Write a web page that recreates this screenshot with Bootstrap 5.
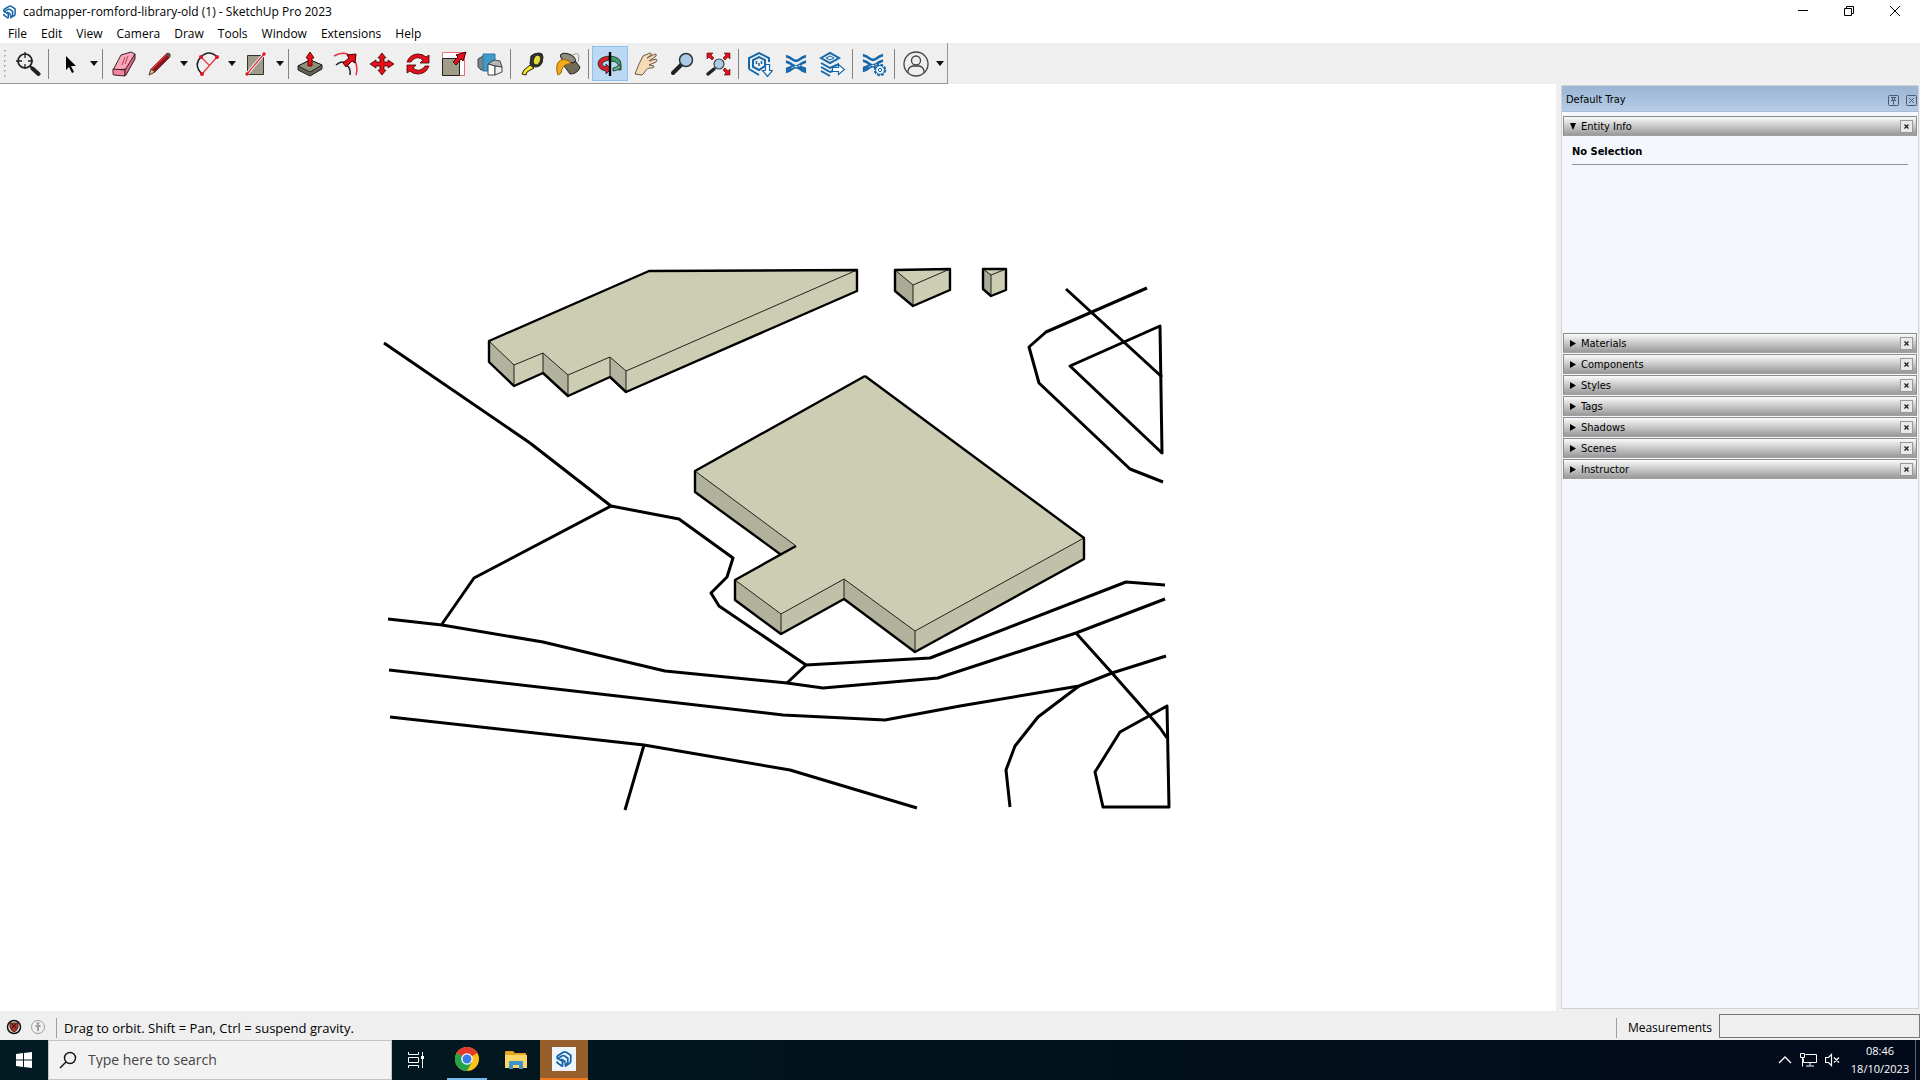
<!DOCTYPE html>
<html lang="en">
<head>
<meta charset="utf-8">
<meta name="viewport" content="width=device-width, initial-scale=1">
<title>cadmapper-romford-library-old (1) - SketchUp Pro 2023</title>
<link rel="stylesheet" href="https://cdn.jsdelivr.net/npm/bootstrap@5.3.0/dist/css/bootstrap.min.css">
<style>
  body { font-family: "Open Sans", "Noto Sans", sans-serif; font-size: 12px; line-height: 16px; color: #000; background: #efefef; }
  button { border: 0; padding: 0; background: transparent; color: inherit; }
  svg { display: block; flex: none; }
  .title-bar { height: 24px; padding: 0 2px 0 2px; gap: 6px; }
  .win-btns { height: 22px; }
  .win-btn { width: 46px; height: 22px; }
  .menu-bar { height: 19px; padding-left: 1px; }
  .menu-bar a { color: #000; padding: 0 7px; }
  .tool-strip { height: 41px; }
  .tool-group { border-bottom: 1px solid #949494; border-right: 1px solid #949494; width: 948px; padding-top: 1px; }
  .grip { width: 10px; height: 32px; background: radial-gradient(circle, #b0b0b0 1px, transparent 1px) 2px 0 / 5px 5px repeat-y; }
  .tool { width: 36px; height: 35px; }
  .tool.active { background: #bcd9f3; border: 1px solid #8fc0ea; }
  .caret { width: 12px; height: 35px; }
  .divider { width: 6px; height: 30px; padding-left: 2px; }
  .divider::before { content: ""; display: block; width: 1px; height: 100%; background: #808080; }
  .tray { width: 359px; margin-left: 5px; padding-top: 1px; font-family: "DejaVu Sans Condensed", "Noto Sans", sans-serif; font-size: 11px; }
  .tray-box { border: 1px solid #cfd2d6; background: #f4f7fc; margin: 0 1px 2px 0; }
  .tray-title { height: 26px; background: linear-gradient(#9bb4d1, #b5cde9); border-bottom: 1px solid #a9bcd2; padding: 3px 1px 0 4px; gap: 7px; }
  .tray-title button { width: 11px; height: 11px; }
  .panel-list { padding: 4px 1px 0; }
  .panel { height: 20px; border: 1px solid #8c8c8c; border-bottom-color: #a0a0a0; background: linear-gradient(#fbfbfb, #c9c9c9 50%, #999); padding: 0 3px 0 5px; margin-bottom: 1px; }
  .panel span { padding-top: 2px; }
  .panel-x { width: 13px; height: 13px; border: 1px solid #999; background: #e9e9e9; }
  .info-body { height: 196px; padding: 6px 9px; }
  .info-body h2 { font-size: 11px; line-height: 18px; padding-bottom: 3px; border-bottom: 1px solid #8f9194; }
  .status-bar { height: 29px; gap: 7px; }
  .status-bar span { font-size: 13px; }
  .status-rule { width: 1px; height: 20px; background: #a0a0a0; }
  .measure-box { width: 201px; height: 24px; border: 1px solid #777; background: #efefef; border-radius: 0; }
  .task-bar { height: 40px; background: linear-gradient(90deg, #021a21, #01131c 50%, #030a1b); color: #fff; }
  .task-btn { width: 48px; height: 40px; }
  .search-box { width: 344px; height: 40px; background: #f2f2f2; border: 1px solid #c4c4c4; padding-left: 10px; gap: 11px; }
  .search-box input { border: 0; background: transparent; outline: 0; font-size: 14px; color: #444; }
  .search-box input::placeholder { color: #444; opacity: 1; }
  .running { border-bottom: 2px solid #76b9ed; width: 40px; height: 40px; margin: 0 5px 0 7px; }
  .current { background: #965f2c; border-bottom: 2px solid #f07818; }
  .clock { width: 70px; line-height: 18px; font-size: 11px; }
  .show-desk { width: 5px; height: 40px; border-left: 1px solid #5c6470; }
</style>
<script src="https://cdn.jsdelivr.net/npm/bootstrap@5.3.0/dist/js/bootstrap.bundle.min.js"></script>
</head>
<body class="d-flex flex-column vh-100 overflow-hidden">

<svg width="0" height="0" class="position-absolute" aria-hidden="true">
  <defs>
    <symbol id="su-logo" viewBox="0 0 24 24"><g fill="none" stroke="#1564a8" stroke-width="2.4" stroke-linejoin="round"><path d="M3 8 11 3q2-1 4 0l6 4v8q0 2-2 3l-6 4"/><path d="M3 12l6-4q2-1 4 0l4 3v6l-4 3"/><path d="M3 8v3l7 4v7"/><path d="M3 15v2l7 5"/><path d="M8 12l5 3v3"/></g></symbol>
    <symbol id="ext-waves" viewBox="0 0 24 24"><path d="M1 2q5 1 8 4 3 2 6 0 3-3 8-4v3q-4 1-6 3-5 4-10 0-2-2-6-3zM1 8q5 1 8 4 3 2 6 0 3-3 8-4v3q-4 1-6 3-5 3-10 0-2-2-6-3zM1 22q5-1 8-4 3-2 6 0 3 3 8 4v-3q-4-1-6-3-5-4-10 0-2 2-6 3zM1 16q4-1 7-3l3 2q-5 2-10 4zM23 16q-4-1-7-3l-3 2q5 2 10 4z" fill="#1467ab"/></symbol>
    <symbol id="tri-down" viewBox="0 0 8 5"><path d="M0 0h8L4 5z" fill="#111"/></symbol>
    <symbol id="tiny-x" viewBox="0 0 5 5"><path d="M.5.5l4 4m0-4l-4 4" stroke="#222" stroke-width="1.3"/></symbol>
  </defs>
</svg>

<header class="bg-white">
  <div class="title-bar d-flex align-items-center">
    <svg width="15" height="16"><use href="#su-logo" width="15" height="16"/></svg>
    <span class="me-auto">cadmapper-romford-library-old (1) - SketchUp Pro 2023</span>
    <div class="win-btns d-flex align-self-start">
    <button class="win-btn d-flex justify-content-center align-items-center" aria-label="Minimize"><svg width="10" height="10"><path d="M0 4.500h10" stroke="#000"/></svg></button>
    <button class="win-btn d-flex justify-content-center align-items-center" aria-label="Restore"><svg width="10" height="10" fill="none" stroke="#000"><path d="M.5 2.500h7v7h-7zM2.500 2.500v-2h7v7h-2"/></svg></button>
    <button class="win-btn d-flex justify-content-center align-items-center" aria-label="Close"><svg width="10" height="10"><path d="M0 0l10 10M10 0L0 10" stroke="#000"/></svg></button>
    </div>
  </div>
  <nav class="menu-bar d-flex align-items-center">
    <a href="#" class="text-decoration-none">File</a><a href="#" class="text-decoration-none">Edit</a><a href="#" class="text-decoration-none">View</a><a href="#" class="text-decoration-none">Camera</a><a href="#" class="text-decoration-none">Draw</a><a href="#" class="text-decoration-none">Tools</a><a href="#" class="text-decoration-none">Window</a><a href="#" class="text-decoration-none">Extensions</a><a href="#" class="text-decoration-none">Help</a>
  </nav>
</header>

<div class="tool-strip d-flex">
  <div class="tool-group d-flex align-items-center" role="toolbar" aria-label="Getting Started">
    <div class="grip"></div>
    <button class="tool d-flex justify-content-center align-items-center" aria-label="Search"><svg width="26" height="26"><circle cx="10" cy="10" r="7" fill="none" stroke="#222" stroke-width="1.700"/><path d="M10 1v6m0 6v5M1 10h6m6 0h5" stroke="#222" stroke-width="1.300"/><path d="M15 15l3 3" stroke="#222" stroke-width="2"/><path d="M17.500 17.500l6 5.500" stroke="#222" stroke-width="4" stroke-linecap="round"/></svg></button>
    <div class="divider"></div>
    <button class="tool d-flex justify-content-center align-items-center" aria-label="Select"><svg width="26" height="26"><path d="M9 5v14l3-3 3 6 2-1-3-6h5z" fill="#000"/></svg></button>
    <button class="caret d-flex justify-content-center align-items-center" aria-label="Select options"><svg width="8" height="5"><use href="#tri-down"/></svg></button>
    <div class="divider"></div>
    <button class="tool d-flex justify-content-center align-items-center" aria-label="Eraser"><svg width="26" height="26" stroke="#3a2228" stroke-linejoin="round"><path d="M10 4l10-3 4 2-8 15-14 1z" fill="#f9a6b8"/><path d="M2 18l12 1v6L3 24q-1 0-1-1z" fill="#f6839b"/><path d="M14 19L24 3v5l-9 16-1 1z" fill="#d96a82"/><path d="M14 6l-3 8m6-9l-3 8" stroke="#a34559" fill="none"/></svg></button>
    <button class="tool d-flex justify-content-center align-items-center" aria-label="Line"><svg width="26" height="26"><path d="M2 24l2-6L19 3q2-2 4 0 1 2-1 4L8 21z" fill="#8d1418" stroke="#3a1010" stroke-width=".6"/><path d="M5 18L20 3" stroke="#e8323a" stroke-width="1.500"/><path d="M2 24l2-6 4 3z" fill="#e3b98a" stroke="#332" stroke-width=".7"/><path d="M19 3q2-2 4 0 1 2-1 4z" fill="#555"/></svg></button>
    <button class="caret d-flex justify-content-center align-items-center" aria-label="Line options"><svg width="8" height="5"><use href="#tri-down"/></svg></button>
    <button class="tool d-flex justify-content-center align-items-center" aria-label="2 Point Arc"><svg width="26" height="26" fill="none"><path d="M7 23Q-2 14 6 6q8-8 16 0" stroke="#222" stroke-width="1.500"/><path d="M22 6L7 23M6 6l9 9" stroke="#e8323f" stroke-width="1.200"/><g fill="#e01025"><circle cx="22" cy="6" r="2"/><circle cx="7" cy="23" r="2"/><circle cx="6" cy="6" r="2"/></g></svg></button>
    <button class="caret d-flex justify-content-center align-items-center" aria-label="Arc options"><svg width="8" height="5"><use href="#tri-down"/></svg></button>
    <button class="tool d-flex justify-content-center align-items-center" aria-label="Rectangle"><svg width="26" height="26"><path d="M4.500 4.500h16v19h-16z" fill="#a09c8a" stroke="#333"/><path d="M4 23L21 3" stroke="#fff" stroke-width="3"/><path d="M4 23L21 3" stroke="#d8202e" stroke-width="1.200"/><circle cx="4" cy="23" r="1.700" fill="#e01025"/><circle cx="21" cy="3" r="1.700" fill="#e01025"/></svg></button>
    <button class="caret d-flex justify-content-center align-items-center" aria-label="Rectangle options"><svg width="8" height="5"><use href="#tri-down"/></svg></button>
    <div class="divider"></div>
    <button class="tool d-flex justify-content-center align-items-center" aria-label="Push/Pull"><svg width="26" height="26" stroke="#222" stroke-linejoin="round"><path d="M1 15l12-6 12 5v4l-12 7-12-6z" fill="#5f6350"/><path d="M1 15l12-6 12 5-12 7z" fill="#8d927a"/><path d="M13 1l4 6h-2v8h-4V7H9z" fill="#e5101c" stroke="#700"/></svg></button>
    <button class="tool d-flex justify-content-center align-items-center" aria-label="Offset"><svg width="26" height="26" fill="none"><path d="M1 5q10-6 18 1 7 8 4 18" stroke="#e8323f" stroke-width="1.500"/><path d="M3 14q7-6 11 0 4 4 3 10" stroke="#222" stroke-width="1.500"/><path d="M10 12l6-5-2-3 9-1-1 9-3-2-6 6z" fill="#e5101c" stroke="#400"/></svg></button>
    <button class="tool d-flex justify-content-center align-items-center" aria-label="Move"><svg width="26" height="26" fill="#e5101c" stroke="#400" stroke-width=".8"><path d="M13 2l4 5h-2v4h4V9l6 4-6 4v-2h-4v4h2l-4 5-4-5h2v-4H7v2l-6-4 6-4v2h4V7H9z"/></svg></button>
    <button class="tool d-flex justify-content-center align-items-center" aria-label="Rotate"><svg width="26" height="26" fill="#e5101c" stroke="#400" stroke-width=".8"><path d="M2 11Q5 3 13 3q5 0 8 3l3-2v8h-9l3-3q-5-4-9-1-2 1-3 3z"/><path d="M24 15q-3 8-11 8-5 0-8-3l-3 2v-8h9l-3 3q5 4 9 1 2-1 3-3z"/></svg></button>
    <button class="tool d-flex justify-content-center align-items-center" aria-label="Scale"><svg width="26" height="26"><path d="M1.500 1.500h22v23h-22z" fill="#fff" stroke="#f06a78"/><path d="M1.500 7.500h17v17h-17z" fill="#a09c8a" stroke="#222"/><path d="M12 11l5-5-2-2 10-3-3 9-2-2-5 6z" fill="#e5101c" stroke="#400"/></svg></button>
    <button class="tool d-flex justify-content-center align-items-center" aria-label="Flip"><svg width="26" height="26" stroke="#444" stroke-linejoin="round"><path d="M1 8l5-3h4v14H4l-3-3z" fill="#808488"/><path d="M6 3h12v17H6z" fill="#3e9cc8" stroke="#2879a5"/><path d="M11 13l6-4 6 1 2 6-7-1z" fill="#b8b8b8"/><path d="M11 13l7 2v9h-7z" fill="#fff"/><path d="M18 15l7 1v5l-7 3z" fill="#eee"/></svg></button>
    <div class="divider"></div>
    <button class="tool d-flex justify-content-center align-items-center" aria-label="Tape Measure"><svg width="26" height="26" stroke="#222"><path d="M12 5q3-3 8-3 4 0 4 4l-1 6q-2 4-6 4-5 0-6-3z" fill="#333"/><ellipse cx="18" cy="9" rx="3.500" ry="5" fill="#e3dd3a" transform="rotate(20 18 9)"/><path d="M11 14l4 3-7 4-1 3-4-1 2-4z" fill="#f0e51e"/></svg></button>
    <button class="tool d-flex justify-content-center align-items-center" aria-label="Paint"><svg width="26" height="26" stroke="#222" stroke-linejoin="round"><path d="M7 6l10 0 8 10q-2 7-10 7L7 12z" fill="#6f6b58"/><ellipse cx="13" cy="7" rx="8" ry="4" fill="#8f8b7c" transform="rotate(22 13 7)"/><path d="M12 9Q4 7 2 14q-1 6 1 10 4-1 4-6 3-6 9-5-1-3-4-4z" fill="#f4a91c" stroke="#9a620a"/><path d="M17 4q6-3 7 1l-1 6" fill="none" stroke="#999"/></svg></button>
    <div class="divider"></div>
    <button class="tool active d-flex justify-content-center align-items-center" aria-label="Orbit"><svg width="26" height="26" stroke="#222" stroke-width=".8"><path d="M13 5q11 1 11 8v6q-3 0-5-1l1-2q2-1 1-3-2-3-8-3z" fill="#3f9d6c"/><path d="M12 5Q1 6 1 13q1 6 8 7v3l5-5-5-5v3q-4-1-4-3 1-3 7-4z" fill="#d4202d"/><path d="M22 14l2 1q0 4-8 5v-3q5-1 6-3z" fill="#5ab887"/><path d="M13 1v24" stroke="#000" stroke-width="2.400"/></svg></button>
    <button class="tool d-flex justify-content-center align-items-center" aria-label="Pan"><svg width="26" height="26"><path d="M2 23l4-10 4-8 7-3q2 0 1 2l-4 3 8-4q2 0 1 2l-7 5 7-2q2 1 0 3l-7 3 5 1q0 2-2 2-5-1-8 5l-2 2z" fill="#f5dcb8" stroke="#6b5944"/></svg></button>
    <button class="tool d-flex justify-content-center align-items-center" aria-label="Zoom"><svg width="26" height="26"><path d="M4 22l8-8" stroke="#222" stroke-width="4" stroke-linecap="round"/><circle cx="17" cy="9" r="6.500" fill="#a9cbe8" stroke="#333" stroke-width="1.500"/></svg></button>
    <button class="tool d-flex justify-content-center align-items-center" aria-label="Zoom Extents"><svg width="26" height="26"><path d="M3 23l6-5" stroke="#222" stroke-width="3.500" stroke-linecap="round"/><circle cx="14" cy="13" r="5" fill="#a9cbe8" stroke="#444" stroke-width="1.200"/><g fill="#e5101c" stroke="#400" stroke-width=".6"><path d="M2 2h6L6 4l3 3-2 2-3-3-2 2zM25 2h-6l2 2-3 3 2 2 3-3 2 2zM25 24h-6l2-2-3-3 2-2 3 3 2-2z"/></g></svg></button>
    <div class="divider"></div>
    <button class="tool d-flex justify-content-center align-items-center" aria-label="3D Warehouse"><svg width="26" height="26" fill="none" stroke="#1467ab" stroke-width="2"><path d="M2 18V7l10-5 10 5v4M2 18l10 6"/><path d="M6 16V9l6-3 6 3v6l-6 4z"/><path d="M12 12v3M9.500 10v3M14.500 10v3" stroke-width="1.500"/><path d="M18.500 13.500h4v6h3l-5 6-5-6h3z" fill="#fff" stroke-width="1.200"/></svg></button>
    <button class="tool d-flex justify-content-center align-items-center" aria-label="Extension Warehouse"><svg width="22" height="22"><use href="#ext-waves"/></svg></button>
    <button class="tool d-flex justify-content-center align-items-center" aria-label="Send to LayOut"><svg width="26" height="26" fill="none" stroke="#1467ab" stroke-width="2"><path d="M2 7l9-5 9 5-9 5z"/><path d="M7 7l4-2 4 2-4 2z" stroke-width="1"/><path d="M2 12l9 5 9-4M2 16l9 5 3-1M2 20l9 5"/><path d="M13.500 16.500h6v-3l6 5-6 5v-3h-6z" fill="#fff" stroke-width="1.200"/></svg></button>
    <div class="divider"></div>
    <button class="tool d-flex justify-content-center align-items-center" aria-label="Extension Manager"><svg width="26" height="26"><use href="#ext-waves" x="1" y="1" width="22" height="22"/><circle cx="19" cy="19" r="5" fill="#fff" stroke="#1467ab" stroke-width="2.500" stroke-dasharray="2.600 1.300"/><circle cx="19" cy="19" r="4.300" fill="#fff" stroke="#1467ab"/><circle cx="19" cy="19" r="1.700" fill="none" stroke="#1467ab"/></svg></button>
    <div class="divider"></div>
    <button class="tool d-flex justify-content-center align-items-center" aria-label="Account"><svg width="26" height="26" fill="none" stroke="#444" stroke-width="1.300"><circle cx="13" cy="13" r="12"/><circle cx="13" cy="9.500" r="4.500"/><path d="M5 22v-2q1-5 6-5h4q5 0 6 5v2"/></svg></button>
    <button class="caret d-flex justify-content-center align-items-center" aria-label="Account options"><svg width="8" height="5"><use href="#tri-down"/></svg></button>
  </div>
</div>

<main class="d-flex flex-grow-1 overflow-hidden">
  <div class="bg-white flex-grow-1 overflow-hidden">
    <svg width="1556" height="927" viewBox="0 84 1556 927" role="img" aria-label="3D model viewport" stroke="#000" stroke-linejoin="round">
      <g fill="none" stroke-width="3">
        <path d="M384 343L530 443 611 506 679 519 733 558 727 577 711 593 719 606 806 665 787 683"/>
        <path d="M611 506L474 578 442 624"/>
        <path d="M388 619L442 625 543 642 665 671 787 683 823 688 938 678 1076 633 1165 599"/>
        <path d="M806 665L930 658 1126 582 1165 585"/>
        <path d="M389 670L783 715 885 720 960 706 1079 686 1112 673 1166 656"/>
        <path d="M390 717L644 745 790 770 917 808M644 745L625 810"/>
        <path d="M1076 633L1112 673 1149 715 1160 728 1167 738"/>
        <path d="M1079 686L1038 717 1015 746 1006 770 1010 807"/>
        <path d="M1167 706L1120 732 1095 772 1103 807H1169z"/>
        <path d="M1066 289L1162 377M1147 288L1046 332 1029 347 1039 383 1130 469 1163 482"/>
        <path d="M1070 366L1160 326 1162 453z"/>
      </g>
      <g stroke="none">
        <path fill="#cdcdb4" d="M489 341L649 271 857 270V291L626 392 610 377 568 396 543 373 514 386 489 362z"/>
        <path fill="#b2b29e" d="M489 341l25 24v21l-25-24zM543 353l25 22v21l-25-23zM610 357l16 14v21l-16-15z"/>
        <path fill="#cbcbb2" d="M865 376L1084 538V559L915 652 844 599 781 634 735 600V580L780 554 695 492V471z"/>
        <path fill="#cdcdb4" d="M865 376L1084 538 915 631 844 579 781 614 735 580 796 546 695 471z"/>
        <path fill="#b1b19c" d="M695 471L796 546 780 554 695 492zM735 580l46 34v20l-46-34zM844 579l71 52v21l-71-53z"/>
        <path fill="#c1c1aa" d="M781 614l63-35v20l-63 35zM915 631l169-93v21l-169 93z"/>
        <path fill="#cdcdb4" d="M895 270l55-1v21l-37 16-18-15zM983 269h23v21l-15 6-8-7z"/>
        <path fill="#aaaa96" d="M895 270l18 15v21l-18-15zM983 269l8 6v21l-8-7z"/>
      </g>
      <g fill="none" stroke-width="1" stroke="#22221c">
        <path d="M489 341L514 365 543 353 568 375 610 357 626 371 857 270M514 365V386M543 353V373M568 375V396M610 357V377M626 371V392"/>
        <path d="M695 471L796 546M735 580L781 614 844 579 915 631 1084 538M781 614V634M844 579V599M915 631V652"/>
        <path d="M895 270L913 285 950 269M913 285V306M983 269L991 275 1006 269M991 275V296"/>
      </g>
      <g fill="none" stroke-width="2.400">
        <path d="M489 341L649 271 857 270V291L626 392 610 377 568 396 543 373 514 386 489 362z"/>
        <path d="M865 376L1084 538V559L915 652 844 599 781 634 735 600V580L796 546M780 554L695 492V471L865 376"/>
        <path d="M895 270l55-1v21l-37 16-18-15zM983 269h23v21l-15 6-8-7z"/>
      </g>
    </svg>
  </div>
  <aside class="tray d-flex flex-column">
    <div class="tray-box flex-grow-1">
      <div class="tray-title d-flex align-items-center">
        <span class="me-auto">Default Tray</span>
        <button aria-label="Auto hide"><svg width="11" height="11" fill="none" stroke="#4c5a6c"><rect x=".5" y=".5" width="10" height="10" rx="1"/><path d="M3 2.500h5M4.500 2.500v3M6.500 2.500v3M3 5.500h5M5.500 5.500v4"/></svg></button>
        <button aria-label="Close tray"><svg width="11" height="11" fill="none" stroke="#4c5a6c"><rect x=".5" y=".5" width="10" height="10" rx="1"/><path d="M3 3l5 5M8 3l-5 5"/></svg></button>
      </div>
      <div class="panel-list">
        <div class="panel d-flex align-items-center"><svg width="8" height="7" class="me-1"><path d="M1 0h6L4 7z"/></svg><span class="me-auto">Entity Info</span><button class="panel-x d-flex justify-content-center align-items-center" aria-label="Close Entity Info"><svg width="5" height="5"><use href="#tiny-x"/></svg></button></div>
        <div class="info-body"><h2 class="fw-bold m-0">No Selection</h2></div>
        <div class="panel d-flex align-items-center"><svg width="8" height="7" class="me-1"><path d="M1 0v7l6-3.500z"/></svg><span class="me-auto">Materials</span><button class="panel-x d-flex justify-content-center align-items-center" aria-label="Close Materials"><svg width="5" height="5"><use href="#tiny-x"/></svg></button></div>
        <div class="panel d-flex align-items-center"><svg width="8" height="7" class="me-1"><path d="M1 0v7l6-3.500z"/></svg><span class="me-auto">Components</span><button class="panel-x d-flex justify-content-center align-items-center" aria-label="Close Components"><svg width="5" height="5"><use href="#tiny-x"/></svg></button></div>
        <div class="panel d-flex align-items-center"><svg width="8" height="7" class="me-1"><path d="M1 0v7l6-3.500z"/></svg><span class="me-auto">Styles</span><button class="panel-x d-flex justify-content-center align-items-center" aria-label="Close Styles"><svg width="5" height="5"><use href="#tiny-x"/></svg></button></div>
        <div class="panel d-flex align-items-center"><svg width="8" height="7" class="me-1"><path d="M1 0v7l6-3.500z"/></svg><span class="me-auto">Tags</span><button class="panel-x d-flex justify-content-center align-items-center" aria-label="Close Tags"><svg width="5" height="5"><use href="#tiny-x"/></svg></button></div>
        <div class="panel d-flex align-items-center"><svg width="8" height="7" class="me-1"><path d="M1 0v7l6-3.500z"/></svg><span class="me-auto">Shadows</span><button class="panel-x d-flex justify-content-center align-items-center" aria-label="Close Shadows"><svg width="5" height="5"><use href="#tiny-x"/></svg></button></div>
        <div class="panel d-flex align-items-center"><svg width="8" height="7" class="me-1"><path d="M1 0v7l6-3.500z"/></svg><span class="me-auto">Scenes</span><button class="panel-x d-flex justify-content-center align-items-center" aria-label="Close Scenes"><svg width="5" height="5"><use href="#tiny-x"/></svg></button></div>
        <div class="panel d-flex align-items-center"><svg width="8" height="7" class="me-1"><path d="M1 0v7l6-3.500z"/></svg><span class="me-auto">Instructor</span><button class="panel-x d-flex justify-content-center align-items-center" aria-label="Close Instructor"><svg width="5" height="5"><use href="#tiny-x"/></svg></button></div>
      </div>
    </div>
  </aside>
</main>

<div class="status-bar d-flex align-items-center pt-1 ps-1">
  <button aria-label="Geo-location"><svg width="18" height="18"><circle cx="10" cy="8" r="6.500" fill="#eee" stroke="#111" stroke-width="1.500"/><path d="M6 4h8v4q-1 4-4 5-3-1-4-5z" fill="#b03028" stroke="#421"/><path d="M8 5l4 4m0-4l-4 4" stroke="#311"/></svg></button>
  <button aria-label="Credits"><svg width="16" height="18" fill="none" stroke="#a0a0a0"><circle cx="9" cy="8" r="6.500"/><path d="M6.500 7h5M9 7v5" stroke-width="2"/><circle cx="9" cy="4.500" r="1" fill="#a0a0a0"/></svg></button>
  <div class="status-rule ms-1"></div>
  <span class="me-auto">Drag to orbit. Shift = Pan, Ctrl = suspend gravity.</span>
  <div class="status-rule me-1"></div>
  <label for="measure">Measurements</label>
  <input id="measure" type="text" class="measure-box mb-1">
</div>

<footer class="task-bar d-flex align-items-center">
  <button class="task-btn d-flex justify-content-center align-items-center" aria-label="Start"><svg width="16" height="16" fill="#fff"><path d="M0 2l7-1v6.500H0zM8 1l8-1v7.500H8zM0 8.500h7V15l-7-1zM8 8.500h8V16l-8-1z"/></svg></button>
  <div class="search-box d-flex align-items-center">
    <svg width="18" height="18" fill="none" stroke="#111" stroke-width="1.400"><circle cx="11" cy="7" r="5.500"/><path d="M7 11l-6 6"/></svg>
    <input type="text" placeholder="Type here to search" aria-label="Search" class="p-0 flex-grow-1">
  </div>
  <button class="task-btn d-flex justify-content-center align-items-center" aria-label="Task View"><svg width="18" height="16" fill="none" stroke="#fff"><path d="M1.500 0v2.500h10V0M1.500 16v-2.500h10V16M1.500 5.500h10v5h-10zM15.500 0v16"/><path d="M14 4h3v3h-3z" fill="#fff" stroke="none"/></svg></button>
  <button class="running d-flex justify-content-center align-items-center" aria-label="Google Chrome"><svg width="24" height="24"><circle cx="12" cy="12" r="12" fill="#fbc116"/><path d="M12 12L1.600 6A12 12 0 0 1 22.400 6z" fill="#e33b2e"/><path d="M1.600 6A12 12 0 0 0 12 24l5-9-5-3z" fill="#25a34b"/><circle cx="12" cy="12" r="5.800" fill="#fff"/><circle cx="12" cy="12" r="4.500" fill="#3b7de8"/></svg></button>
  <button class="task-btn d-flex justify-content-center align-items-center" aria-label="File Explorer"><svg width="22" height="20"><path d="M0 2q0-1 1-1h7l2 2h11v15H0z" fill="#e5a823"/><path d="M0 5h22v13H0z" fill="#fbd667"/><path d="M4 19v-7q0-1 1-1h12q1 0 1 1v7h-4v-4H8v4z" fill="#3f93cd"/></svg></button>
  <button class="task-btn current d-flex justify-content-center align-items-center me-auto" aria-label="SketchUp"><svg width="24" height="24"><path d="M0 0h24v24H0z" fill="#eef4fa"/><use href="#su-logo" x="3" y="3" width="18" height="18"/></svg></button>
  <div class="d-flex align-items-center gap-2 me-1">
    <svg width="14" height="8" fill="none" stroke="#fff" stroke-width="1.300"><path d="M1 7l6-6 6 6"/></svg>
    <svg width="17" height="14" fill="none" stroke="#fff"><path d="M5.500 1.500h11v8h-13v-4M10 9.500v3M6 13h8M.5.500h4v4h-4zM2.500 4.500v9"/></svg>
    <svg width="16" height="14" fill="none" stroke="#fff"><path d="M.5 4.500h3l3-3v11l-3-3h-3zM9 4.500l5 5m0-5l-5 5" stroke-width="1.200"/></svg>
  </div>
  <div class="clock d-flex flex-column align-items-center"><span>08:46</span><span>18/10/2023</span></div>
  <div class="show-desk"></div>
</footer>
</body>
</html>
